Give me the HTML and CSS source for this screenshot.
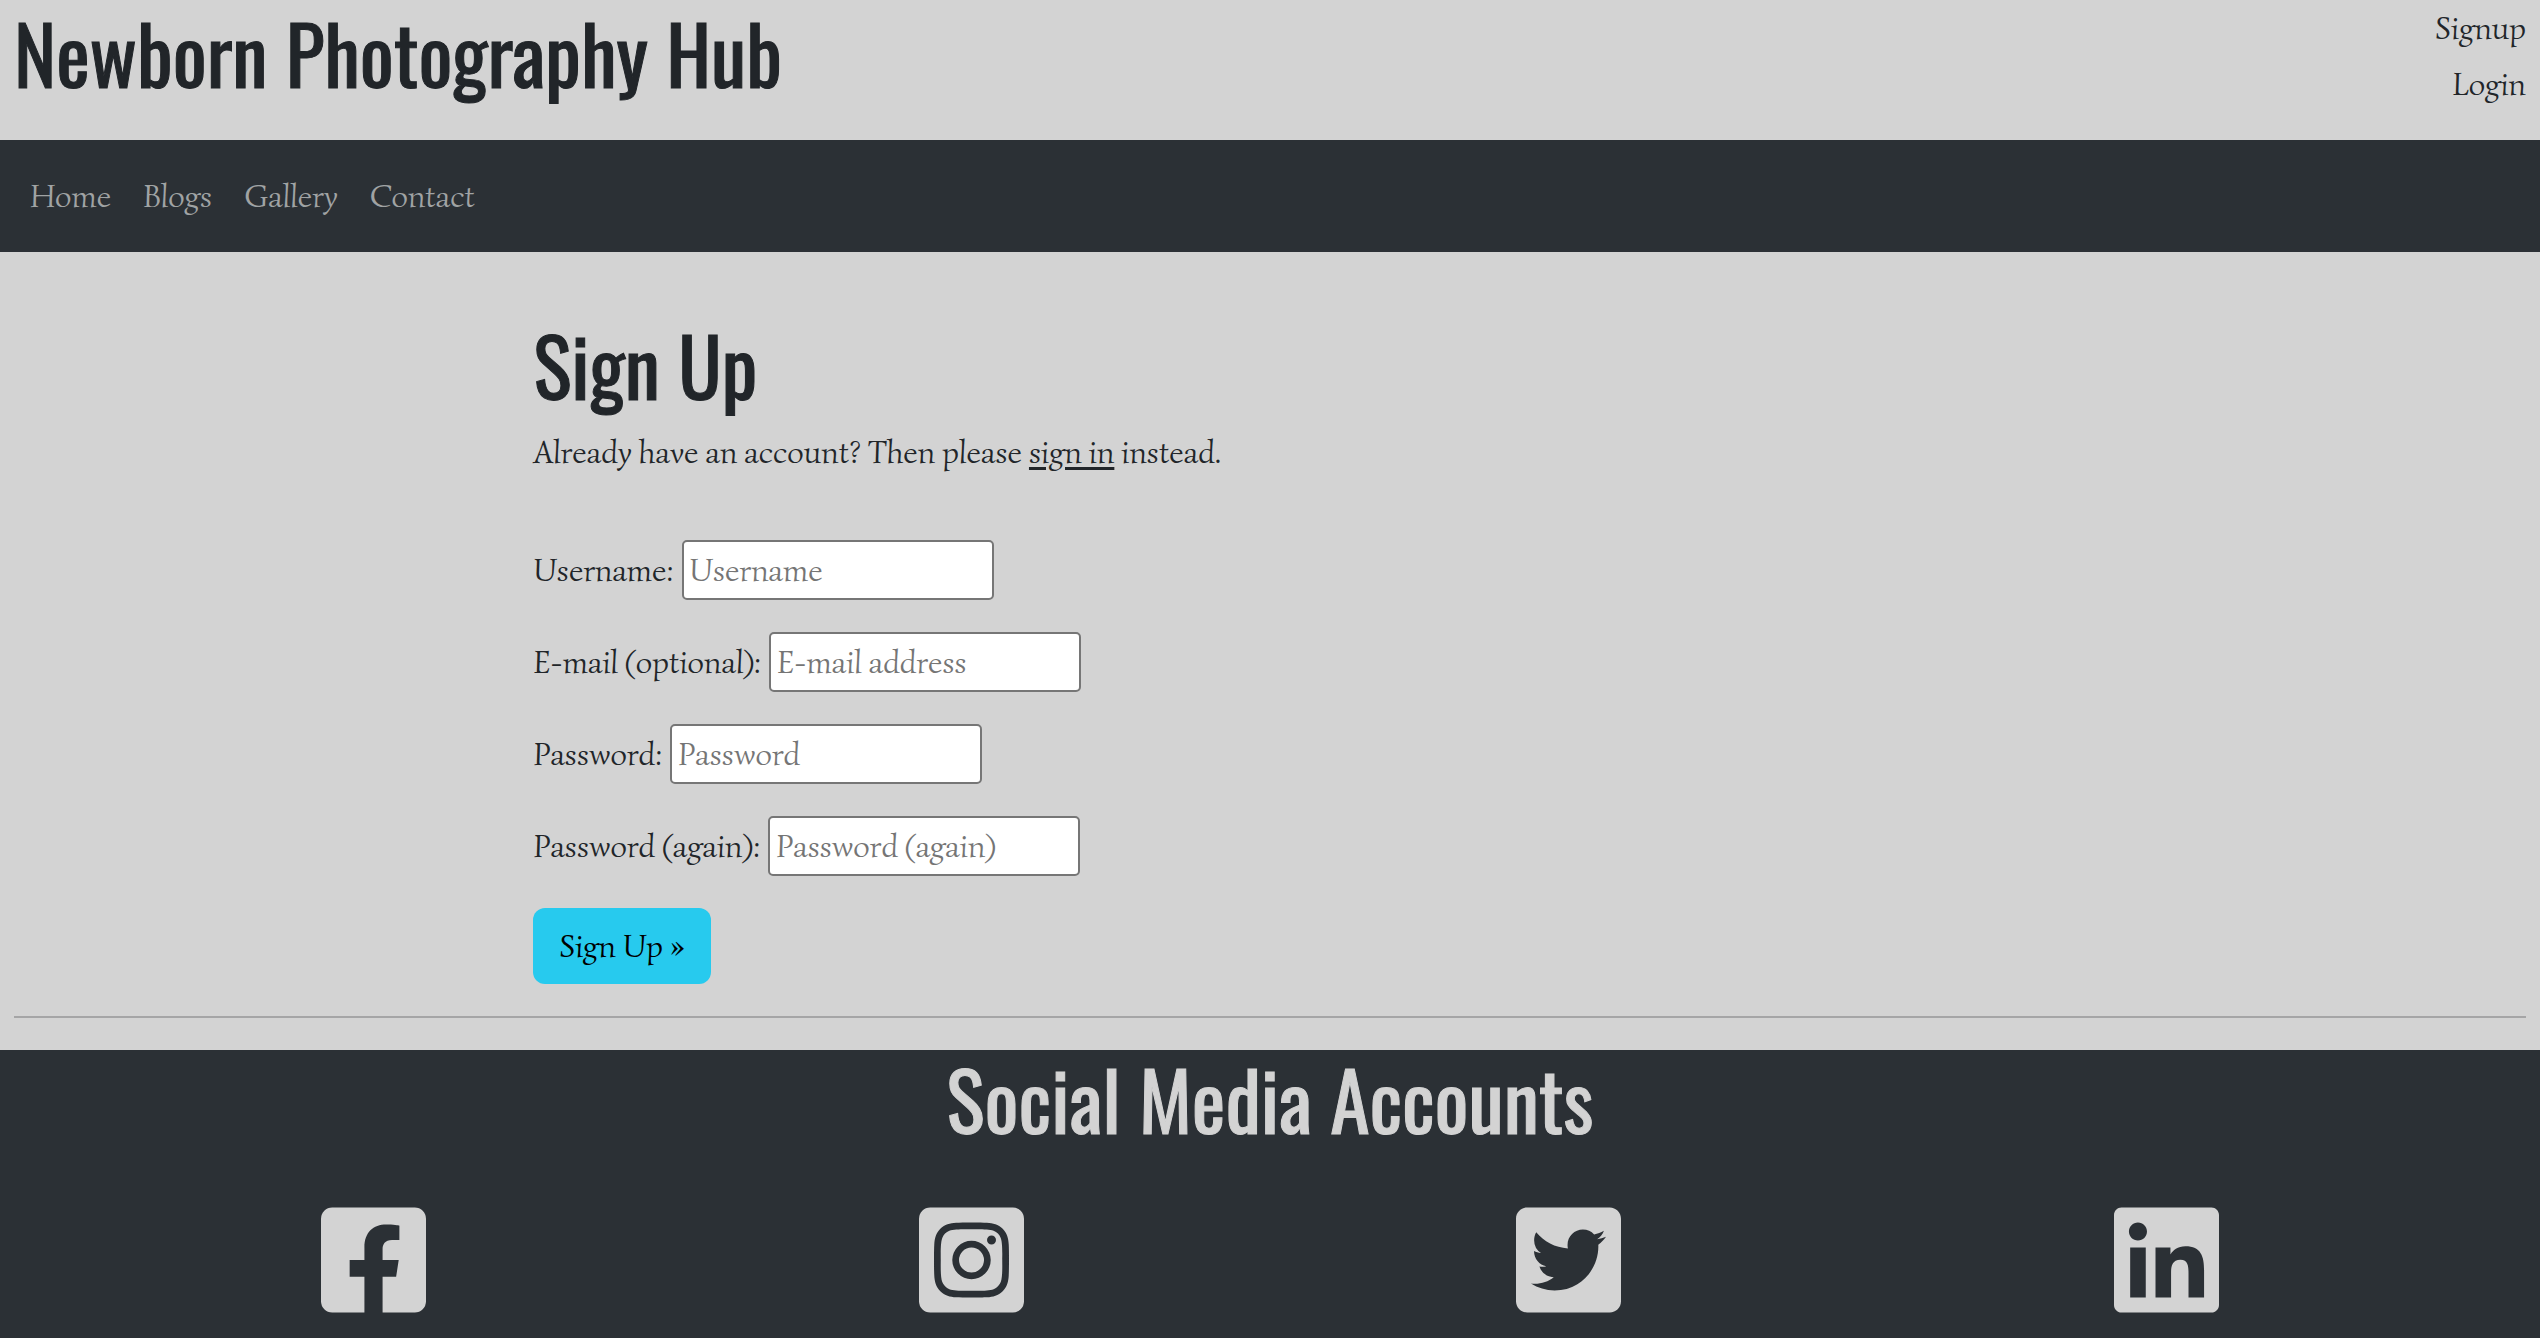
FILE: index.html
```
<!DOCTYPE html>
<html lang="en">
<head>
  <meta charset="utf-8">
  <meta name="viewport" content="width=device-width, initial-scale=1">
  <title>Newborn Photography Hub</title>
  <link rel="stylesheet" href="styles.css">
</head>
<body>
  <header class="site-header">
    <h1 class="heading">Newborn Photography Hub</h1>
    <div class="account-links">
      <a href="#signup">Signup</a>
      <a href="#login">Login</a>
    </div>
  </header>

  <nav class="main-nav">
    <a href="#home">Home</a>
    <a href="#blogs">Blogs</a>
    <a href="#gallery">Gallery</a>
    <a href="#contact">Contact</a>
  </nav>

  <main class="content" id="signup">
    <h2 class="heading">Sign Up</h2>
    <p class="intro">Already have an account? Then please <a href="#login">sign in</a> instead.</p>
    <form class="signup-form">
      <div class="field">
        <label for="username">Username:</label>
        <input type="text" id="username" placeholder="Username">
      </div>
      <div class="field">
        <label for="email">E-mail (optional):</label>
        <input type="email" id="email" placeholder="E-mail address">
      </div>
      <div class="field">
        <label for="password1">Password:</label>
        <input type="password" id="password1" placeholder="Password">
      </div>
      <div class="field">
        <label for="password2">Password (again):</label>
        <input type="password" id="password2" placeholder="Password (again)">
      </div>
      <button class="btn" type="submit">Sign Up »</button>
    </form>
  </main>

  <hr class="divider">

  <footer class="site-footer">
    <h2 class="heading">Social Media Accounts</h2>
    <ul class="social">
      <li><a href="#facebook" aria-label="Facebook"><svg viewBox="0 0 448 512"><path d="M400 32H48A48 48 0 0 0 0 80v352a48 48 0 0 0 48 48h137.25V327.69h-63V256h63v-54.64c0-62.15 37-96.48 93.67-96.48 27.14 0 55.52 4.84 55.52 4.84v61h-31.27c-30.81 0-40.42 19.12-40.42 38.73V256h68.78l-11 71.69h-57.78V480H400a48 48 0 0 0 48-48V80a48 48 0 0 0-48-48z"/></svg></a></li>
      <li><a href="#instagram" aria-label="Instagram"><svg viewBox="0 0 448 512"><path d="M224,202.66A53.34,53.34,0,1,0,277.36,256,53.38,53.38,0,0,0,224,202.66Zm124.71-41a54,54,0,0,0-30.41-30.41c-21-8.29-71-6.43-94.3-6.43s-73.25-1.93-94.31,6.43a54,54,0,0,0-30.41,30.41c-8.28,21-6.43,71.05-6.43,94.33S91,329.26,99.32,350.33a54,54,0,0,0,30.41,30.41c21,8.29,71,6.43,94.31,6.43s73.24,1.93,94.3-6.43a54,54,0,0,0,30.41-30.41c8.35-21,6.43-71.05,6.43-94.33S357.1,182.74,348.75,161.67ZM224,338a82,82,0,1,1,82-82A81.9,81.9,0,0,1,224,338Zm85.38-148.3a19.14,19.14,0,1,1,19.13-19.14A19.1,19.1,0,0,1,309.42,189.74ZM400,32H48A48,48,0,0,0,0,80V432a48,48,0,0,0,48,48H400a48,48,0,0,0,48-48V80A48,48,0,0,0,400,32ZM382.88,322c-1.29,25.63-7.14,48.34-25.85,67s-41.4,24.63-67,25.85c-26.41,1.49-105.59,1.49-132,0-25.63-1.29-48.26-7.15-67-25.85s-24.63-41.42-25.85-67c-1.49-26.42-1.49-105.61,0-132,1.29-25.63,7.07-48.34,25.85-67s41.47-24.56,67-25.78c26.41-1.49,105.59-1.49,132,0,25.63,1.29,48.33,7.15,67,25.85s24.63,41.42,25.85,67.05C384.37,216.44,384.37,295.56,382.88,322Z"/></svg></a></li>
      <li><a href="#twitter" aria-label="Twitter"><svg viewBox="0 0 448 512"><path d="M400 32H48C21.5 32 0 53.5 0 80v352c0 26.5 21.5 48 48 48h352c26.5 0 48-21.5 48-48V80c0-26.5-21.5-48-48-48zm-48.9 158.8c.2 2.8.2 5.7.2 8.5 0 86.7-66 186.6-186.6 186.6-37.2 0-71.7-10.8-100.7-29.4 5.3.6 10.4.8 15.8.8 30.7 0 58.9-10.4 81.4-28-28.8-.6-53-19.5-61.3-45.5 10.1 1.5 19.2 1.5 29.6-1.2-30-6.1-52.5-32.5-52.5-64.4v-.8c8.7 4.9 18.9 7.9 29.6 8.3a65.447 65.447 0 0 1-29.2-54.6c0-12.2 3.2-23.4 8.9-33.1 32.3 39.8 80.8 65.8 135.2 68.6-9.3-44.5 24-80.6 64-80.6 18.9 0 35.9 7.9 47.9 20.7 14.8-2.8 29-8.3 41.6-15.8-4.9 15.2-15.2 28-28.8 36.1 13.2-1.4 26-5.1 37.8-10.2-8.9 13.1-20.1 24.7-32.9 34z"/></svg></a></li>
      <li><a href="#linkedin" aria-label="LinkedIn"><svg viewBox="0 0 448 512"><path d="M416 32H31.9C14.3 32 0 46.5 0 64.3v383.4C0 465.5 14.3 480 31.9 480H416c17.6 0 32-14.5 32-32.3V64.3c0-17.8-14.4-32.3-32-32.3zM135.4 416H69V202.2h66.5V416zm-33.2-243c-21.3 0-38.5-17.3-38.5-38.5S80.9 96 102.2 96c21.2 0 38.5 17.3 38.5 38.5 0 21.3-17.2 38.5-38.5 38.5zm282.1 243h-66.4V312c0-24.8-.5-56.7-34.5-56.7-34.6 0-39.9 27-39.9 54.9V416h-66.4V202.2h63.7v29.2h.9c8.9-16.8 30.6-34.5 62.9-34.5 67.2 0 79.7 44.3 79.7 101.9V416z"/></svg></a></li>
    </ul>
  </footer>
</body>
</html>
```
FILE: styles.css
```
* {
  box-sizing: border-box;
}

body {
  margin: 0;
  background: #d3d3d3;
  color: #212529;
  font: 32px/48px Simonetta, "Liberation Serif", serif;
}

a {
  color: inherit;
}

.heading {
  margin: 0;
  font: 400 80px/96px Oswald, "Roboto Condensed", Roboto, sans-serif;
  -webkit-text-stroke: 1px currentColor;
}

.site-header {
  display: flex;
  justify-content: space-between;
  padding: 4px 14px 32px;
}

.account-links {
  display: flex;
  flex-direction: column;
  align-items: flex-end;
  gap: 8px;
}

.account-links a,
.main-nav a {
  text-decoration: none;
}

.main-nav {
  display: flex;
  gap: 32px;
  padding: 32px 30px;
  background: #2b3035;
  color: #a0a3a4;
}

.content {
  margin: 0 21%;
  padding: 64px 0 32px;
}

.intro {
  margin: 16px 0 64px;
}

.intro a {
  text-underline-offset: 4px;
  text-decoration-thickness: 3px;
}

.signup-form {
  display: flex;
  flex-direction: column;
  align-items: flex-start;
  gap: 32px;
}

.field {
  display: flex;
  align-items: center;
  gap: 8px;
}

.field input {
  width: 312px;
  height: 60px;
  padding: 2px 6px;
  border: 2px solid #767676;
  border-radius: 5px;
  background: #fff;
  color: #000;
  font: inherit;
}

.field input::placeholder {
  color: #757575;
}

.btn {
  padding: 14px 26px;
  border: 0;
  border-radius: 12px;
  background: #27caee;
  color: #000;
  font: inherit;
}

.divider {
  margin: 0 14px 32px;
  border: 0;
  border-top: 2px solid #a5a5a6;
}

.site-footer {
  background: #2b3035;
  color: #d3d3d3;
  text-align: center;
}

.social {
  display: flex;
  margin: 0;
  padding: 54px 75px 18px;
  list-style: none;
}

.social li {
  flex: 1;
}

.social svg {
  display: block;
  height: 120px;
  margin: 0 auto;
  fill: currentColor;
}
```
